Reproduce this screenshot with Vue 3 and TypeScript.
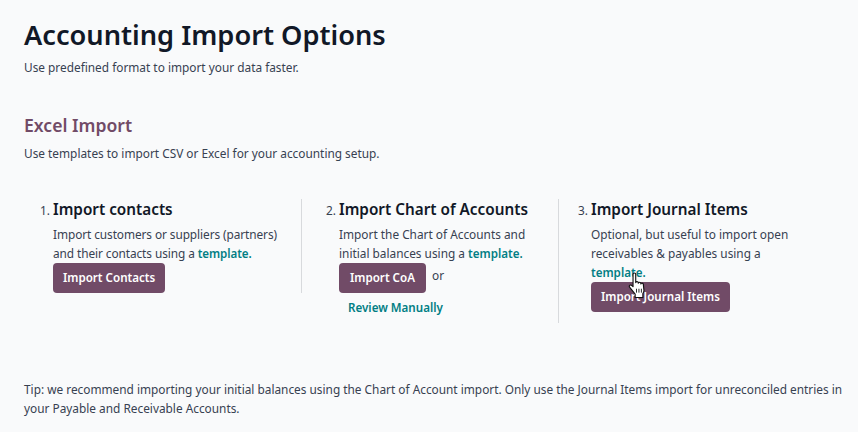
<script setup lang="ts">
interface Step { title: string; }
const steps: Step[] = [{ title: 'Import contacts' }, { title: 'Import Chart of Accounts' }, { title: 'Import Journal Items' }];
</script>

<template>
  <main class="page">
    <h1 class="title">Accounting Import Options</h1>
    <p class="lead">Use predefined format to import your data faster.</p>
    <h2 class="section">Excel Import</h2>
    <p class="lead">Use templates to import CSV or Excel for your accounting setup.</p>

    <div class="cols">
      <section class="col col1">
        <h3 class="step"><span class="num">1.</span>{{ steps[0].title }}</h3>
        <div class="body">
          <p>Import customers or suppliers (partners) and their contacts using a <a class="link">template.</a></p>
          <button class="btn">Import Contacts</button>
        </div>
      </section>
      <section class="col col2">
        <h3 class="step"><span class="num">2.</span>{{ steps[1].title }}</h3>
        <div class="body">
          <p>Import the Chart of Accounts and initial balances using a <a class="link">template.</a></p>
          <div class="or-row"><button class="btn">Import CoA</button><span class="or">or</span></div>
          <a class="link review">Review Manually</a>
        </div>
      </section>
      <section class="col col3">
        <h3 class="step"><span class="num">3.</span>{{ steps[2].title }}</h3>
        <div class="body">
          <p>Optional, but useful to import open receivables &amp; payables using a <a class="link">template.</a></p>
          <button class="btn">Import Journal Items</button>
        </div>
        <svg class="cursor" width="19" height="26" viewBox="0 0 17 23.3" aria-hidden="true">
          <path d="M4.5 2c0-1.5 2.4-1.5 2.4 0v7.5c0-1.2 2.3-1.2 2.3 0v.6c0-1.2 2.3-1.2 2.3 0v.7c0-1.1 2.2-1.1 2.2.1l.6 5.6c0 1.2-.5 2-1 2.8V23H6.4v-3.2L1.4 13.6c-.9-1.5.9-2.8 2.3-1.2l.8.8z" fill="#fff" stroke="#111" stroke-width="1" stroke-linejoin="round"/>
          <path d="M7.6 15v3.5M9.8 15v3.5M12 15v3.5" stroke="#111" stroke-width="0.8" fill="none"/>
        </svg>
      </section>
    </div>

    <p class="tip">Tip: we recommend importing your initial balances using the Chart of Account import. Only use the Journal Items import for unreconciled entries in your Payable and Receivable Accounts.</p>
  </main>
</template>

<style>
html, body { margin: 0; background: #f9fafb; }
</style>

<style scoped>
.page {
  box-sizing: border-box;
  width: 858px;
  height: 432px;
  padding: 16px 14px 0 24px;
  overflow: hidden;
  background: #f9fafb;
  color: #374151;
  font-family: "Noto Sans", sans-serif;
  font-size: 11.85px;
  line-height: 19px;
}
p { margin: 0; }
.title {
  margin: 0 0 4px;
  font-size: 27.2px;
  line-height: 38px;
  font-weight: 600;
  color: #111827;
}
.section {
  margin: 36px 0 7px;
  font-size: 17.6px;
  line-height: 24px;
  font-weight: 600;
  color: #714b67;
}
.cols { display: flex; align-items: flex-start; margin-top: 36px; }
.col { box-sizing: border-box; position: relative; border-right: 1px solid #d8dadd; }
.col1 { width: 278px; padding-left: 16px; }
.col2 { width: 257px; padding-left: 24px; }
.col3 { width: 280px; padding-left: 19px; border-right: 0; }
.step {
  display: flex;
  align-items: baseline;
  margin: 0 0 5px;
  font-size: 15.3px;
  line-height: 20px;
  font-weight: 600;
  color: #111827;
}
.num { width: 13px; font-size: 11.85px; font-weight: 400; color: #374151; }
.body { max-width: 226px; padding-left: 13px; }
.col1 .body { max-width: 232px; }
.col1 .body p { letter-spacing: -0.08px; }
.col2 .body { max-width: 215px; }
.link { color: #017e84; font-weight: 600; font-size: 11.6px; }
.btn {
  display: block;
  height: 30px;
  padding: 0 10px;
  border: 0;
  border-radius: 4px;
  background: #714b67;
  color: #fff;
  font: 600 11.6px/30px "Noto Sans", sans-serif;
}
.or-row { display: flex; align-items: flex-start; }
.or-row .btn { min-width: 87px; }
.or { margin-left: 6px; line-height: 24px; }
.review { display: block; padding: 3px 0 3px 9px; line-height: 24px; }
.cursor { position: absolute; left: 69px; top: 73px; }
.tip { margin-top: 57px; }
</style>
